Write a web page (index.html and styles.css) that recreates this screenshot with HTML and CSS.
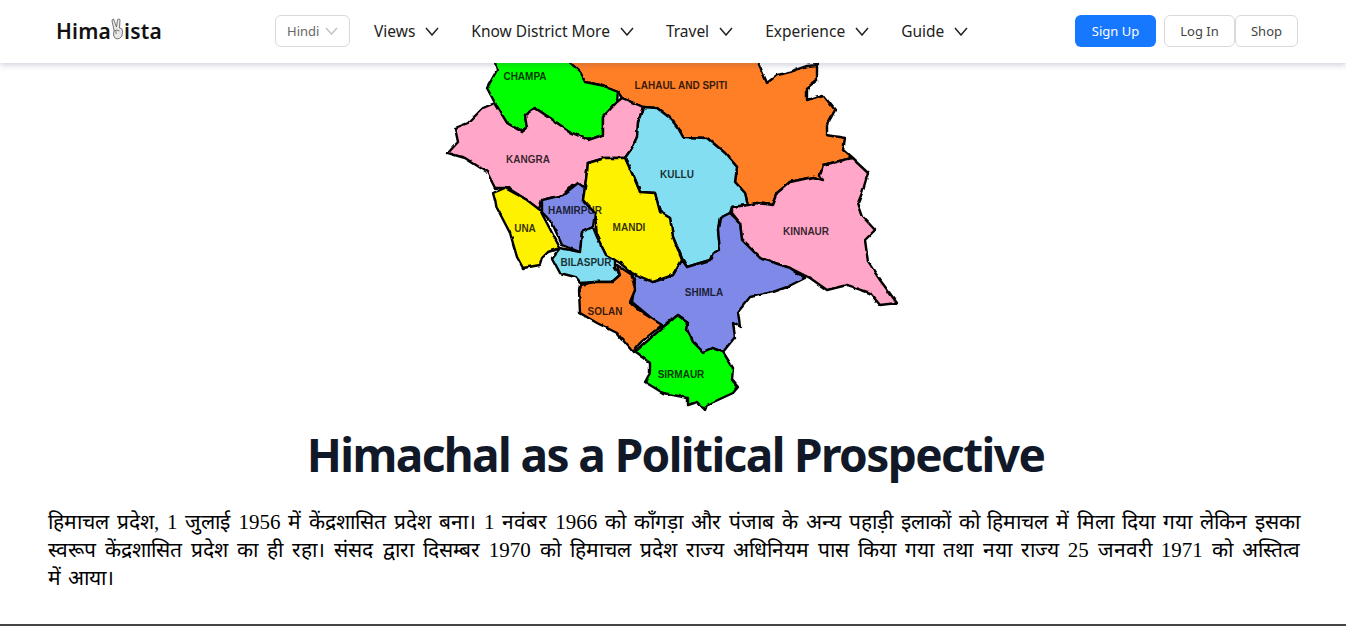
FILE: index.html
```html
<!DOCTYPE html>
<html lang="en">
<head>
  <meta charset="UTF-8">
  <meta name="viewport" content="width=device-width, initial-scale=1.0">
  <title>Himachal as a Political Prospective</title>
  <link rel="stylesheet" href="styles.css">
</head>
<body>

  <header class="topbar">
    <a class="logo" href="#">
      <span>Hima</span>
      <svg class="logo-hand" width="13" height="22" viewBox="0 0 13 22" fill="#e8e8e8" stroke="#666" stroke-width="0.9" stroke-linejoin="round">
        <path d="M3 12 L1 3 Q1 1 2.5 1 L5.5 9 L6.5 1.5 Q7.5 0.5 9 1.5 L8.5 10 Q11.5 10 11.5 13 L11 18 Q9 21 6 21 Q3 20.5 2.5 17 Z"/>
        <path d="M3 13 Q6 11 8.5 13 M5 13 L5 16"/>
      </svg>
      <span>ista</span>
    </a>

    <div class="lang-select">
      <span>Hindi</span>
      <svg class="chevron" width="13" height="8" viewBox="0 0 13 8"><polyline points="1,1 6.5,7 12,1" stroke="#c4c4c4"/></svg>
    </div>

    <nav class="nav">
      <a class="nav-item" href="#">Views <svg class="chevron" width="14" height="9" viewBox="0 0 14 9"><polyline points="1,1 7,8 13,1"/></svg></a>
      <a class="nav-item" href="#">Know District More <svg class="chevron" width="14" height="9" viewBox="0 0 14 9"><polyline points="1,1 7,8 13,1"/></svg></a>
      <a class="nav-item" href="#">Travel <svg class="chevron" width="14" height="9" viewBox="0 0 14 9"><polyline points="1,1 7,8 13,1"/></svg></a>
      <a class="nav-item" href="#">Experience <svg class="chevron" width="14" height="9" viewBox="0 0 14 9"><polyline points="1,1 7,8 13,1"/></svg></a>
      <a class="nav-item" href="#">Guide <svg class="chevron" width="14" height="9" viewBox="0 0 14 9"><polyline points="1,1 7,8 13,1"/></svg></a>
    </nav>

    <div class="actions">
      <button class="btn btn-primary">Sign Up</button>
      <div class="btn-pair">
        <button class="btn btn-login">Log In</button>
        <button class="btn btn-shop">Shop</button>
      </div>
    </div>
  </header>

  <main>
    <svg class="map" width="466" height="352" viewBox="440 63 466 352">
      <defs>
        <filter id="rough" x="-5%" y="-5%" width="110%" height="110%">
          <feTurbulence type="fractalNoise" baseFrequency="0.12" numOctaves="2" seed="4"/>
          <feDisplacementMap in="SourceGraphic" scale="3" xChannelSelector="R" yChannelSelector="G"/>
          <feGaussianBlur stdDeviation="0.35"/>
        </filter>
      </defs>
      <g class="districts" filter="url(#rough)">
        <polygon fill="#ff7f27" points="562,55 755,55 767,83 777,75 787,73 807,66 817,65 817,80 807,88 807,100 823,95 835,110 827,125 827,135 845,138 843,150 852,158 823,165 820,175 823,180 813,177 790,182 777,193 772,205 757,203 748,205 745,193 735,182 737,167 725,153 707,138 683,137 678,128 670,118 657,108 643,107 622,98 618,92 600,85 585,82 580,72"/>
        <polygon fill="#00ff00" points="493,55 562,55 580,72 585,82 600,85 618,92 617,102 603,117 603,135 588,140 570,132 550,118 535,108 525,115 527,128 522,132 507,123 495,103 487,88 497,70"/>
        <polygon fill="#ffa6c9" points="495,103 507,123 522,132 527,128 525,115 535,108 550,118 570,132 588,140 603,135 603,117 617,102 622,98 643,107 638,123 637,137 632,148 625,158 605,158 588,163 585,187 572,185 563,195 542,200 538,212 527,200 508,188 495,188 487,172 465,158 448,153 458,142 455,128 468,123 483,108"/>
        <polygon fill="#82def0" points="643,107 657,108 670,118 678,128 683,137 707,138 725,153 737,167 735,182 745,193 748,205 732,207 730,213 720,218 718,230 720,250 713,253 710,260 687,267 682,258 673,237 670,218 660,212 655,193 640,192 635,180 625,158 632,148 637,137 638,123"/>
        <polygon fill="#ffa6c9" points="732,207 748,205 757,203 772,205 777,193 790,182 813,177 823,180 820,175 823,165 852,158 868,173 862,193 858,203 863,217 875,230 865,240 868,262 880,280 897,303 880,305 870,293 847,285 827,290 810,278 790,268 760,258 742,240 740,223 732,213"/>
        <polygon fill="#7f8ae8" points="632,273 653,282 673,275 682,260 687,267 710,260 713,253 720,250 718,230 720,218 730,213 740,223 742,240 760,258 790,268 805,278 787,287 773,292 750,297 738,312 740,327 733,323 735,337 723,352 712,348 703,352 693,342 687,330 688,322 678,315 662,328 650,317 632,302 635,283"/>
        <polygon fill="#fff200" points="493,193 505,188 527,200 540,210 560,248 548,252 542,258 540,265 523,268 517,257 510,233 497,208"/>
        <polygon fill="#7f8ae8" points="542,200 563,195 578,183 585,188 583,200 595,213 593,227 582,232 580,252 562,245 552,223 542,212"/>
        <polygon fill="#fff200" points="583,200 585,187 588,163 605,158 625,158 635,180 640,192 655,193 660,212 670,218 673,237 682,260 673,275 653,282 632,273 620,263 606,255 597,237 595,213"/>
        <polygon fill="#82def0" points="582,232 593,227 597,237 606,255 615,260 615,268 620,275 612,282 595,282 580,283 575,277 560,273 552,258 560,248 580,252"/>
        <polygon fill="#ff7f27" points="617,265 632,275 635,290 630,302 643,313 662,325 640,343 633,352 627,345 617,333 597,323 580,313 579,290 580,285 595,282 612,282 620,275"/>
        <polygon fill="#00ff00" points="678,315 688,322 687,330 693,342 703,352 712,348 723,352 733,368 732,380 738,387 733,393 707,405 705,410 697,402 688,405 688,398 663,393 645,382 650,373 650,363 635,352 662,328"/>
      </g>
      <g class="labels">
        <text x="525" y="79.5">CHAMPA</text>
        <text x="681" y="88.5">LAHAUL AND SPITI</text>
        <text x="528" y="162.5">KANGRA</text>
        <text x="677" y="177.5">KULLU</text>
        <text x="575" y="213.5">HAMIRPUR</text>
        <text x="525" y="231.5">UNA</text>
        <text x="629" y="230.5">MANDI</text>
        <text x="806" y="234.5">KINNAUR</text>
        <text x="586" y="265.5">BILASPUR</text>
        <text x="704" y="295.5">SHIMLA</text>
        <text x="605" y="314.5">SOLAN</text>
        <text x="681" y="377.5">SIRMAUR</text>
      </g>
    </svg>

    <h1 class="title">Himachal as a Political Prospective</h1>

    <p class="intro">हिमाचल प्रदेश, 1 जुलाई 1956 में केंद्रशासित प्रदेश बना। 1 नवंबर 1966 को काँगड़ा और पंजाब के अन्य पहाड़ी इलाकों को हिमाचल में मिला दिया गया लेकिन इसका स्वरूप केंद्रशासित प्रदेश का ही रहा। संसद द्वारा दिसम्बर 1970 को हिमाचल प्रदेश राज्य अधिनियम पास किया गया तथा नया राज्य 25 जनवरी 1971 को अस्तित्व में&nbsp;आया।</p>

    <div class="next-strip"></div>
  </main>

</body>
</html>
```

FILE: styles.css
```css
body {
  font-family: "Noto Sans", Arial, sans-serif;
  background-color: white;
  margin: 0;
}
a {
  color: inherit;
  text-decoration: none;
}
.topbar {
  position: relative;
  z-index: 1;
  display: flex;
  align-items: center;
  box-sizing: border-box;
  height: 63px;
  padding: 0 48px 1px 56px;
  background-color: white;
  box-shadow: 0 2px 6px rgba(60, 70, 110, 0.25);
}
.logo {
  display: flex;
  align-items: center;
  width: 219px;
  font-size: 21px;
  font-weight: 600;
  letter-spacing: 0.2px;
  color: #111;
}
.logo-hand {
  margin: -4px 0 0 0;
}
.lang-select {
  display: flex;
  align-items: center;
  gap: 6px;
  box-sizing: border-box;
  width: 75px;
  height: 32px;
  padding-left: 11px;
  border: 1px solid #d9d9d9;
  border-radius: 6px;
  font-size: 13px;
  color: #666;
}
.chevron {
  fill: none;
  stroke: #222;
  stroke-width: 1.5;
}
.nav {
  display: flex;
  align-items: center;
  gap: 32px;
  margin-left: 24px;
}
.nav-item {
  display: flex;
  align-items: center;
  gap: 10px;
  font-size: 15.5px;
  color: #222;
}
.actions {
  display: flex;
  margin-left: auto;
  gap: 8px;
}
.btn-pair {
  display: flex;
}
.btn {
  height: 32px;
  padding: 0;
  border: 1px solid #d9d9d9;
  border-radius: 6px;
  background-color: white;
  color: #444;
  font-family: inherit;
  font-size: 13px;
  cursor: pointer;
}
.btn-primary {
  width: 81px;
  border: none;
  background-color: #1677ff;
  color: white;
}
.btn-login {
  width: 71px;
}
.btn-shop {
  width: 63px;
}
.map {
  display: block;
  margin: 0 auto;
}
.labels text {
  font-family: "Liberation Sans", Arial, sans-serif;
  font-size: 10px;
  font-weight: 700;
  text-anchor: middle;
  fill: #000;
  fill-opacity: 0.8;
}
.districts polygon {
  stroke: #000;
  stroke-width: 2.4;
  stroke-linejoin: round;
}
.title {
  margin: 12px 0 0 5px;
  text-align: center;
  font-size: 46px;
  line-height: 54px;
  font-weight: 700;
  letter-spacing: -1.6px;
  color: #111827;
}
.intro {
  margin: 27px 46px 0 48px;
  font-family: "Liberation Serif", serif;
  font-size: 21px;
  word-spacing: 2px;
  line-height: 28px;
  text-align: justify;
  color: #000;
}
.next-strip {
  height: 2px;
  margin-top: 32px;
  background-color: #444;
}
```
